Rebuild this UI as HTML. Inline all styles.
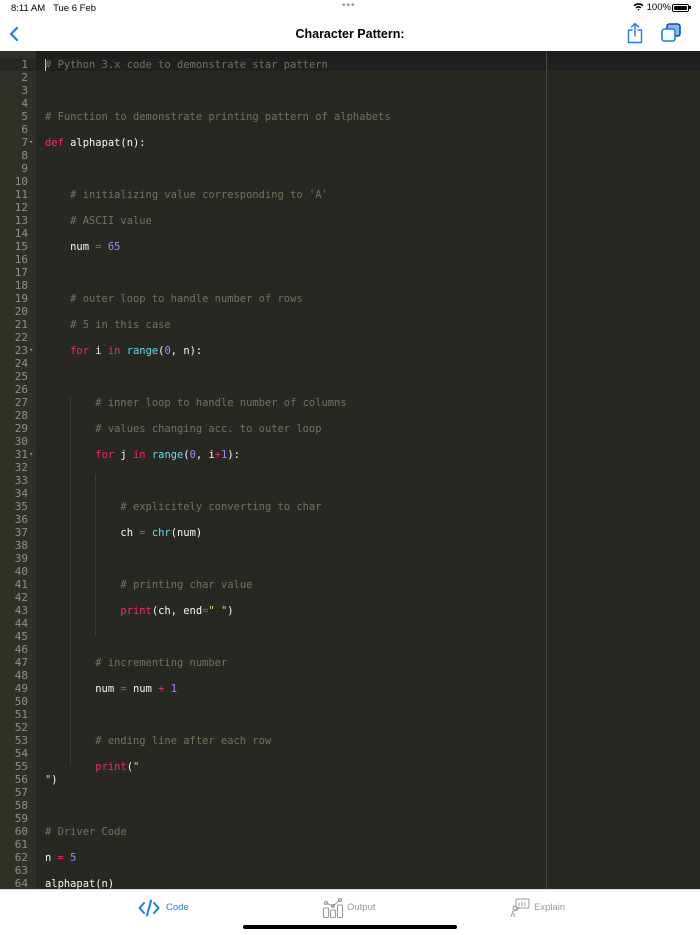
<!DOCTYPE html><html><head><style>
body{margin:0;width:700px;height:934px;overflow:hidden;background:#fff;font-family:"Liberation Sans",sans-serif;position:relative}
.sb{position:absolute;top:0;left:0;width:700px;height:18px;font-size:9.5px;color:#000}
.nav{position:absolute;top:18px;left:0;width:700px;height:33px}
.ed{position:absolute;top:51px;left:0;width:700px;height:838px;background:#272822;overflow:hidden}
.gut{position:absolute;left:0;top:0;width:36px;height:838px;background:#2f3129}
pre{margin:0;font-family:"DejaVu Sans Mono","Liberation Mono",monospace;font-size:10.45px;line-height:13px;position:absolute}
.c{color:#75715e}.k{color:#f92672}.n{color:#ae81ff}.b{color:#66d9ef}.s{color:#e6db74}
.tab{position:absolute;top:889px;left:0;width:700px;height:45px;border-top:1px solid #ddd;background:#fff}
</style></head><body>
<div class="sb"><span style="position:absolute;left:11px;top:3px">8:11 AM&nbsp;&nbsp;&nbsp;Tue 6 Feb</span>
<span style="position:absolute;left:342px;top:0px;color:#999;letter-spacing:1px;font-size:10px">•••</span>
<span style="position:absolute;left:633px;top:2px">
<svg width="11" height="9" viewBox="0 0 11 9" style="vertical-align:-1px"><path d="M0.5 3.2A7 7 0 0 1 10.5 3.2L9.3 4.4A5.3 5.3 0 0 0 1.7 4.4Z M2.5 5.3A4 4 0 0 1 8.5 5.3L7.3 6.5A2.3 2.3 0 0 0 3.7 6.5Z M4.5 7.5L5.5 8.7 6.5 7.5A1.4 1.4 0 0 0 4.5 7.5Z" fill="#000"/></svg> 100%</span>
<span style="position:absolute;left:672px;top:4px;width:15px;height:6px;border:1px solid #000;border-radius:2px;padding:0"><span style="display:block;margin:1px;height:4px;background:#000;border-radius:1px"></span></span>
<span style="position:absolute;left:689px;top:6px;width:1.5px;height:3px;background:#000"></span></div>
<div class="nav">
<svg style="position:absolute;left:8px;top:8px" width="12" height="16" viewBox="0 0 12 16"><path d="M9 2L3 8L9 14" stroke="#1a7cf5" stroke-width="2.2" fill="none" stroke-linecap="round" stroke-linejoin="round"/></svg>
<div style="position:absolute;left:0;width:700px;top:9px;text-align:center;font-weight:bold;font-size:12.5px">Character Pattern:</div>
<svg style="position:absolute;left:626px;top:4px" width="18" height="22" viewBox="0 0 18 22"><path d="M6 8H2.5V20.5H15.5V8H12M9 14V1.5M5.5 5L9 1.5L12.5 5" stroke="#1a7cf5" stroke-width="1.4" fill="none" stroke-linecap="round" stroke-linejoin="round"/></svg>
<svg style="position:absolute;left:660px;top:5px" width="22" height="20" viewBox="0 0 22 20"><rect x="7" y="1" width="13" height="12" rx="2.5" fill="#8ab8f0" stroke="#0b4fb0" stroke-width="1.6"/><rect x="2" y="6" width="13" height="12" rx="2.5" fill="#fff" stroke="#1a7cf5" stroke-width="1.6"/></svg>
</div>
<div class="ed">
<div style="position:absolute;left:0;top:0;width:700px;height:7px;background:#1e1f1b"></div>
<div class="gut"></div>
<div style="position:absolute;left:0;top:7px;width:36px;height:13px;background:#272822"></div>
<div style="position:absolute;left:36px;top:7px;width:664px;height:13px;background:#202020"></div>
<div style="position:absolute;left:546px;top:0;width:1px;height:838px;background:#464741"></div>
<div style="position:absolute;left:70px;top:345px;width:1px;height:370px;background:#3b3c36"></div>
<div style="position:absolute;left:95px;top:423px;width:1px;height:162px;background:#3b3c36"></div>
<div style="position:absolute;left:45px;top:8px;width:1px;height:12px;background:#ccc"></div>
<pre style="left:0;top:7px;width:28px;text-align:right;color:#8f908a;font-size:11px">1
2
3
4
5
6
7
8
9
10
11
12
13
14
15
16
17
18
19
20
21
22
23
24
25
26
27
28
29
30
31
32
33
34
35
36
37
38
39
40
41
42
43
44
45
46
47
48
49
50
51
52
53
54
55
56
57
58
59
60
61
62
63
64</pre>
<pre style="left:29px;top:7px;color:#8f908a;font-size:7px;line-height:13px"><br><br><br><br><br><br>▾<br><br><br><br><br><br><br><br><br><br><br><br><br><br><br><br>▾<br><br><br><br><br><br><br><br>▾</pre>
<pre style="left:45px;top:8px;color:#f8f8f2"><span class="c"># Python 3.x code to demonstrate star pattern</span>



<span class="c"># Function to demonstrate printing pattern of alphabets</span>

<span class="k">def</span> alphapat(n):



    <span class="c"># initializing value corresponding to 'A'</span>

    <span class="c"># ASCII value</span>

    num <span class="k">=</span> <span class="n">65</span>



    <span class="c"># outer loop to handle number of rows</span>

    <span class="c"># 5 in this case</span>

    <span class="k">for</span> i <span class="k">in</span> <span class="b">range</span>(<span class="n">0</span>, n):



        <span class="c"># inner loop to handle number of columns</span>

        <span class="c"># values changing acc. to outer loop</span>

        <span class="k">for</span> j <span class="k">in</span> <span class="b">range</span>(<span class="n">0</span>, i<span class="k">+</span><span class="n">1</span>):



            <span class="c"># explicitely converting to char</span>

            ch <span class="k">=</span> <span class="b">chr</span>(num)



            <span class="c"># printing char value</span>

            <span class="k">print</span>(ch, end<span class="k">=</span><span class="s">" "</span>)



        <span class="c"># incrementing number</span>

        num <span class="k">=</span> num <span class="k">+</span> <span class="n">1</span>



        <span class="c"># ending line after each row</span>

        <span class="k">print</span>(<span class="s">"</span>
<span class="s">"</span>)



<span class="c"># Driver Code</span>

n <span class="k">=</span> <span class="n">5</span>

alphapat(n)</pre>
</div>
<div class="tab">
<svg style="position:absolute;left:138px;top:9px" width="22" height="18" viewBox="0 0 22 18"><path d="M6 4L1.5 9L6 14M16 4L20.5 9L16 14M13 1.5L9 16.5" stroke="#1a7cf5" stroke-width="2" fill="none" stroke-linecap="round" stroke-linejoin="round"/></svg>
<span style="position:absolute;left:166px;top:12px;font-size:9.5px;color:#1a7cf5">Code</span>
<svg style="position:absolute;left:322px;top:7px" width="22" height="22" viewBox="0 0 22 22"><g stroke="#999" stroke-width="1.1" fill="none"><rect x="1.5" y="11" width="5" height="9.5" rx="1"/><rect x="8.5" y="13" width="5" height="7.5" rx="1"/><rect x="15.5" y="8" width="5" height="12.5" rx="1"/><path d="M4 6L11 9L18 3"/><circle cx="4" cy="6" r="1.5"/><circle cx="11" cy="9" r="1.5"/><circle cx="18" cy="3" r="1.5"/></g></svg>
<span style="position:absolute;left:347px;top:12px;font-size:9.5px;color:#999">Output</span>
<svg style="position:absolute;left:509px;top:7px" width="22" height="22" viewBox="0 0 22 22"><g stroke="#999" stroke-width="1" fill="none"><rect x="7" y="2" width="13" height="9" rx="1"/><path d="M10 9V6M13 9V4.5M16 9V5.5"/><circle cx="6" cy="11" r="2"/><path d="M2 20L4 14L8 13L10 10M5 20V16"/></g></svg>
<span style="position:absolute;left:534px;top:12px;font-size:9.5px;color:#999">Explain</span>
<div style="position:absolute;left:243px;top:35px;width:214px;height:4px;border-radius:2px;background:#000"></div>
</div>
</body></html>
